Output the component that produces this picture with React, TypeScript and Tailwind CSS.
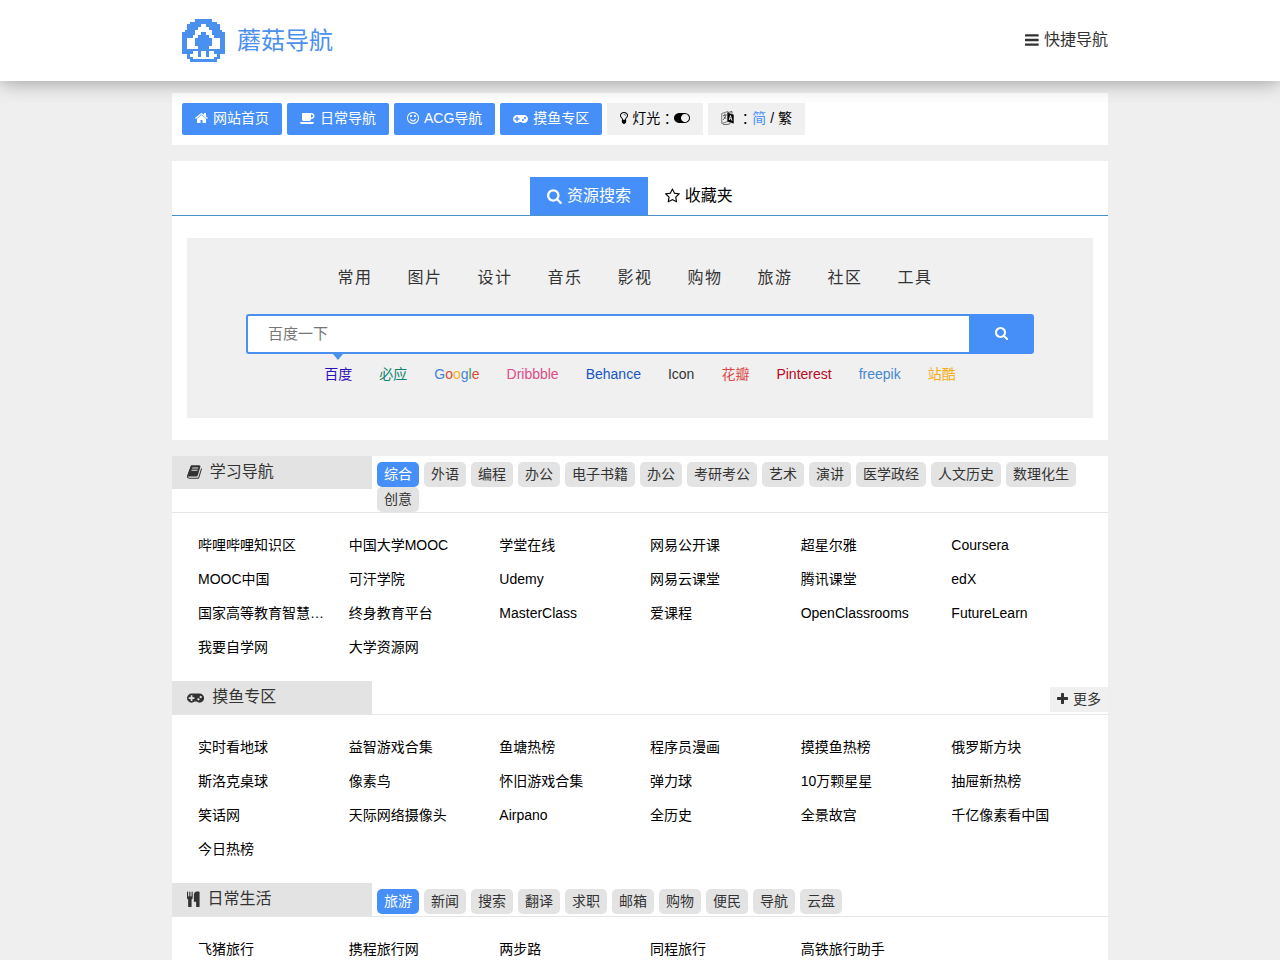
import React from "react";

type Glyph = { x: number; w: number; d: string };

const glyphs: Record<string, Glyph> = {
  home: { x: 64, w: 1664, d: "M1472 992v480q0 26-19 45t-45 19h-384v-384h-256v384h-384q-26 0-45-19t-19-45v-480q0-1 .5-3t.5-3l575-474 575 474q1 2 1 6zm223-69l-62 74q-8 9-21 11h-3q-13 0-21-7l-692-577-692 577q-12 8-24 7-13-2-21-11l-62-74q-8-10-7-23.5t11-21.5l719-599q32-26 76-26t76 26l244 204v-195q0-14 9-23t23-9h192q14 0 23 9t9 23v408l219 182q10 8 11 21.5t-7 23.5z" },
  search: { x: 64, w: 1664, d: "M1216 832q0-185-131.5-316.5t-316.5-131.5-316.5 131.5-131.5 316.5 131.5 316.5 316.5 131.5 316.5-131.5 131.5-316.5zm512 832q0 52-38 90t-90 38q-54 0-90-38l-343-342q-179 124-399 124-143 0-273.5-55.5t-225-150-150-225-55.5-273.5 55.5-273.5 150-225 225-150 273.5-55.5 273.5 55.5 225 150 150 225 55.5 273.5q0 220-124 399l343 343q37 37 37 90z" },
  bars: { x: 128, w: 1536, d: "M1664 1344v128q0 26-19 45t-45 19h-1408q-26 0-45-19t-19-45v-128q0-26 19-45t45-19h1408q26 0 45 19t19 45zm0-512v128q0 26-19 45t-45 19h-1408q-26 0-45-19t-19-45v-128q0-26 19-45t45-19h1408q26 0 45 19t19 45zm0-512v128q0 26-19 45t-45 19h-1408q-26 0-45-19t-19-45v-128q0-26 19-45t45-19h1408q26 0 45 19t19 45z" },
  plus: { x: 192, w: 1408, d: "M1600 736v192q0 40-28 68t-68 28h-416v416q0 40-28 68t-68 28h-192q-40 0-68-28t-28-68v-416h-416q-40 0-68-28t-28-68v-192q0-40 28-68t68-28h416v-416q0-40 28-68t68-28h192q40 0 68 28t28 68v416h416q40 0 68 28t28 68z" },
  star: { x: 64, w: 1664, d: "M1201 1004l306-297-422-62-189-382-189 382-422 62 306 297-73 421 378-199 377 199zm527-357q0 22-26 48l-363 354 86 500q1 7 1 20 0 50-41 50-19 0-40-12l-449-236-449 236q-22 12-40 12-21 0-31.5-14.5t-10.5-35.5q0-6 2-20l86-500-364-354q-25-27-25-48 0-37 56-46l502-73 225-455q19-41 49-41t49 41l225 455 502 73q56 9 56 46z" },
  smile: { x: 128, w: 1536, d: "M1262 1075q-37 121-138 195t-228 74-228-74-138-195q-8-25 4-48.5t38-31.5q25-8 48.5 4t31.5 38q25 80 92.5 129.5t151.5 49.5 151.5-49.5 92.5-129.5q8-26 32-38t49-4 37 31.5 4 48.5zm-494-435q0 53-37.5 90.5t-90.5 37.5-90.5-37.5-37.5-90.5 37.5-90.5 90.5-37.5 90.5 37.5 37.5 90.5zm512 0q0 53-37.5 90.5t-90.5 37.5-90.5-37.5-37.5-90.5 37.5-90.5 90.5-37.5 90.5 37.5 37.5 90.5zm256 256q0-130-51-248.5t-136.5-204-204-136.5-248.5-51-248.5 51-204 136.5-136.5 204-51 248.5 51 248.5 136.5 204 204 136.5 248.5 51 248.5-51 204-136.5 136.5-204 51-248.5zm128 0q0 209-103 385.5t-279.5 279.5-385.5 103-385.5-103-279.5-279.5-103-385.5 103-385.5 279.5-279.5 385.5-103 385.5 103 279.5 279.5 103 385.5z" },
  coffee: { x: 0, w: 1920, d: "M1664 640q0-80-56-136t-136-56h-64v384h64q80 0 136-56t56-136zm-1664 768h1792q0 106-75 181t-181 75h-1280q-106 0-181-75t-75-181zm1856-768q0 159-112.5 271.5t-271.5 112.5h-64v32q0 92-66 158t-158 66h-704q-92 0-158-66t-66-158v-736q0-26 19-45t45-19h1152q159 0 271.5 112.5t112.5 271.5z" },
  gamepad: { x: 0, w: 1920, d: "M832 1088v-128q0-14-9-23t-23-9h-192v-192q0-14-9-23t-23-9h-128q-14 0-23 9t-9 23v192h-192q-14 0-23 9t-9 23v128q0 14 9 23t23 9h192v192q0 14 9 23t23 9h128q14 0 23-9t9-23v-192h192q14 0 23-9t9-23zm576 64q0-53-37.5-90.5t-90.5-37.5-90.5 37.5-37.5 90.5 37.5 90.5 90.5 37.5 90.5-37.5 37.5-90.5zm256-256q0-53-37.5-90.5t-90.5-37.5-90.5 37.5-37.5 90.5 37.5 90.5 90.5 37.5 90.5-37.5 37.5-90.5zm256 128q0 212-150 362t-362 150q-192 0-338-128h-220q-146 128-338 128-212 0-362-150t-150-362 150-362 362-150h896q212 0 362 150t150 362z" },
  book: { x: 64, w: 1664, d: "M1703 478q40 57 18 129l-275 906q-19 64-76.5 107.5t-122.5 43.5h-923q-77 0-148.5-53.5t-99.5-131.5q-24-67-2-127 0-4 3-27t4-37q1-8-3-21.5t-3-19.5q2-11 8-21t16.5-23.5 16.5-23.5q23-38 45-91.5t30-91.5q3-10 .5-30t-.5-28q3-11 17-28t17-23q21-36 42-92t25-90q1-9-2.5-32t.5-28q4-13 22-30.5t22-22.5q19-26 42.5-84.5t27.5-96.5q1-8-3-25.5t-2-26.5q2-8 9-18t18-23 17-21q8-12 16.5-30.5t15-35 16-36 19.5-32 26.5-23.5 36-11.5 47.5 5.5l-1 3q38-9 51-9h761q74 0 114 56t18 130l-274 906q-36 119-71.5 153.5t-128.5 34.5h-869q-27 0-38 15-11 16-1 43 24 70 144 70h923q29 0 56-15.5t35-41.5l300-987q7-22 5-57 38 15 59 43zm-1064 2q-4 13 2 22.5t20 9.5h608q13 0 25.5-9.5t16.5-22.5l21-64q4-13-2-22.5t-20-9.5h-608q-13 0-25.5 9.5t-16.5 22.5zm-83 256q-4 13 2 22.5t20 9.5h608q13 0 25.5-9.5t16.5-22.5l21-64q4-13-2-22.5t-20-9.5h-608q-13 0-25.5 9.5t-16.5 22.5z" },
  cutlery: { x: 192, w: 1408, d: "M832 128v640q0 61-35.5 111t-92.5 70v779q0 52-38 90t-90 38h-128q-52 0-90-38t-38-90v-779q-57-20-92.5-70t-35.5-111v-640q0-26 19-45t45-19 45 19 19 45v416q0 26 19 45t45 19 45-19 19-45v-416q0-26 19-45t45-19 45 19 19 45v416q0 26 19 45t45 19 45-19 19-45v-416q0-26 19-45t45-19 45 19 19 45zm768 0v1600q0 52-38 90t-90 38h-128q-52 0-90-38t-38-90v-512h-224q-13 0-22.5-9.5t-9.5-22.5v-800q0-132 94-226t226-94h256q26 0 45 19t19 45z" },
  toggle: { x: 0, w: 2048, d: "M0 896q0-130 51-248.5t136.5-204 204-136.5 248.5-51h768q130 0 248.5 51t204 136.5 136.5 204 51 248.5-51 248.5-136.5 204-204 136.5-248.5 51h-768q-130 0-248.5-51t-204-136.5-136.5-204-51-248.5zm1408 512q104 0 198.5-40.5t163.5-109.5 109.5-163.5 40.5-198.5-40.5-198.5-109.5-163.5-163.5-109.5-198.5-40.5-198.5 40.5-163.5 109.5-109.5 163.5-40.5 198.5 40.5 198.5 109.5 163.5 163.5 109.5 198.5 40.5z" },
  bulb: { x: 384, w: 1024, d: "M1120 576q0 13-9.5 22.5t-22.5 9.5-22.5-9.5-9.5-22.5q0-46-54-71t-106-25q-13 0-22.5-9.5t-9.5-22.5 9.5-22.5 22.5-9.5q50 0 99.5 16t87 54 37.5 90zm160 0q0-72-34.5-134t-90-101.5-123-62-136.5-22.5-136.5 22.5-123 62-90 101.5-34.5 134q0 101 68 180 10 11 30.5 33t30.5 33q128 153 141 298h228q13-145 141-298 10-11 30.5-33t30.5-33q68-79 68-180zm128 0q0 155-103 268-45 49-74.5 87t-59.5 95.5-34 107.5q47 28 47 82 0 37-25 64 25 27 25 64 0 52-45 81 13 23 13 47 0 46-31.5 71t-77.5 25q-20 44-60 70t-87 26-87-26-60-70q-46 0-77.5-25t-31.5-71q0-24 13-47-45-29-45-81 0-37 25-64-25-27-25-64 0-54 47-82-4-50-34-107.5t-59.5-95.5-74.5-87q-103-113-103-268 0-99 44.5-184.5t117-142 164-89 186.5-32.5 186.5 32.5 164 89 117 142 44.5 184.5z" },
};

function Icon({ name, className = "h-3.5" }: { name: string; className?: string }) {
  const g = glyphs[name];
  return (
    <svg viewBox={`${g.x} 0 ${g.w} 1792`} className={`${className} w-auto shrink-0 fill-current`} aria-hidden="true">
      <path d={g.d} />
    </svg>
  );
}

function LanguageIcon() {
  return (
    <svg viewBox="0 0 26 28" className="h-3.5 w-auto shrink-0" fill="none" stroke="currentColor" aria-hidden="true">
      <path d="M1.500 5 13.500 1v20L1.500 25z" strokeWidth="1" />
      <path d="M4 9.500 11 7.500M7.500 5.500v3M10 8.500c-1 4-3 7-6 9M5.500 11.500l5 4" strokeWidth="1.200" />
      <path d="M13.500 4 25 7.500v17L13.500 21z" fill="currentColor" strokeWidth=".8" />
      <path d="m16.500 18 2.500-9 3 10.500M17.500 15l4 1.200" stroke="#f0f0f0" strokeWidth="1.800" />
      <path d="M14 3 22 1v4M4 26.500c5 1.200 11 1 15-2" strokeWidth="1.200" />
    </svg>
  );
}

const mushroom = [
  "     ######     ",
  "   ##########   ",
  "  #####  #####  ",
  "  ####    ####  ",
  " ####      #### ",
  "#####  ##  #####",
  "####  ####  ####",
  "##   ######   ##",
  "##   ######   ##",
  "##   ######   ##",
  "##    ####    ##",
  "################",
  "####  #  #  ####",
  "  #   #  #   #  ",
  "  ##        ##  ",
  "   ##########   ",
];

// One path for all cells, so that neighbouring cells join without seams.
const mushroomPath = mushroom
  .flatMap((row, y) => [...row.matchAll(/#+/g)].map((run) => `M${run.index} ${y}h${run[0].length}v1h-${run[0].length}z`))
  .join("");

function Logo() {
  return (
    <a href="#" className="flex items-center gap-3 pl-2.5 text-[#4a90ee]">
      <svg viewBox="0 0 16 16" className="size-[43px] fill-current" shapeRendering="crispEdges" aria-hidden="true">
        <path d={mushroomPath} />
      </svg>
      <span className="text-2xl">蘑菇导航</span>
    </a>
  );
}

const pages = [
  { icon: "home", label: "网站首页" },
  { icon: "coffee", label: "日常导航" },
  { icon: "smile", label: "ACG导航" },
  { icon: "gamepad", label: "摸鱼专区" },
];

const categories = ["常用", "图片", "设计", "音乐", "影视", "购物", "旅游", "社区", "工具"];

const engines = [
  { label: "百度", color: "text-[#2c0fb8]" },
  { label: "必应", color: "text-[#11836f]" },
  { label: "Google", color: "" },
  { label: "Dribbble", color: "text-[#dd4b86]" },
  { label: "Behance", color: "text-[#1655c4]" },
  { label: "Icon", color: "text-[#333333]" },
  { label: "花瓣", color: "text-[#dc4a4a]" },
  { label: "Pinterest", color: "text-[#b8081b]" },
  { label: "freepik", color: "text-[#4488cc]" },
  { label: "站酷", color: "text-[#f5ae18]" },
];

function GoogleName() {
  return (
    <>
      <span className="text-[#4285dc]">G</span>
      <span className="text-[#dc4a38]">o</span>
      <span className="text-[#f2b616]">o</span>
      <span className="text-[#4285dc]">g</span>
      <span className="text-[#34a050]">l</span>
      <span className="text-[#dc4a38]">e</span>
    </>
  );
}

function Colon() {
  return <span className="font-['Noto_Sans_CJK_TC',sans-serif]">：</span>;
}

type SectionData = { icon: string; title: string; tags?: string[]; more?: boolean; links: string[] };

const sections: SectionData[] = [
  {
    icon: "book",
    title: "学习导航",
    tags: ["综合", "外语", "编程", "办公", "电子书籍", "办公", "考研考公", "艺术", "演讲", "医学政经", "人文历史", "数理化生", "创意"],
    links: [
      "哔哩哔哩知识区", "中国大学MOOC", "学堂在线", "网易公开课", "超星尔雅", "Coursera",
      "MOOC中国", "可汗学院", "Udemy", "网易云课堂", "腾讯课堂", "edX",
      "国家高等教育智慧…", "终身教育平台", "MasterClass", "爱课程", "OpenClassrooms", "FutureLearn",
      "我要自学网", "大学资源网",
    ],
  },
  {
    icon: "gamepad",
    title: "摸鱼专区",
    more: true,
    links: [
      "实时看地球", "益智游戏合集", "鱼塘热榜", "程序员漫画", "摸摸鱼热榜", "俄罗斯方块",
      "斯洛克桌球", "像素鸟", "怀旧游戏合集", "弹力球", "10万颗星星", "抽屉新热榜",
      "笑话网", "天际网络摄像头", "Airpano", "全历史", "全景故宫", "千亿像素看中国",
      "今日热榜",
    ],
  },
  {
    icon: "cutlery",
    title: "日常生活",
    tags: ["旅游", "新闻", "搜索", "翻译", "求职", "邮箱", "购物", "便民", "导航", "云盘"],
    links: ["飞猪旅行", "携程旅行网", "两步路", "同程旅行", "高铁旅行助手"],
  },
];

function Section({ icon, title, tags, more, links }: SectionData) {
  return (
    <section>
      <div className="flex items-start border-b border-[#e6e6e6]">
        <h2 className="flex h-[33px] w-[200px] shrink-0 items-center gap-2 bg-[#e3e3e3] pb-0.5 pl-[15px] text-base text-[#333333]">
          <Icon name={icon} className="h-4" />
          {title}
        </h2>
        {tags && (
          <div className="flex flex-1 flex-wrap gap-x-[5px] pt-1.5 pl-[5px]">
            {tags.map((tag, i) => (
              <button
                key={i}
                type="button"
                className={`h-[25px] rounded-[5px] px-[7px] pb-0.5 text-sm ${i === 0 ? "bg-[#478ff8] text-white" : "bg-[#e3e3e3] text-[#333333]"}`}
              >
                {tag}
              </button>
            ))}
          </div>
        )}
        {more && (
          <a href="#" className="mt-1.5 ml-auto flex h-[25px] items-center gap-[5px] bg-[#f0f0f0] px-[7px] pb-0.5 text-sm text-[#333333]">
            <Icon name="plus" />
            更多
          </a>
        )}
      </div>
      <ul className="grid grid-cols-6 px-4 py-4 text-sm leading-[33px] text-black">
        {links.map((link) => (
          <li key={link} className="h-[34px] truncate px-2.5">
            <a href="#">{link}</a>
          </li>
        ))}
      </ul>
    </section>
  );
}

export default function App() {
  return (
    <div className="min-h-screen bg-[#efefef] font-['Liberation_Sans','Noto_Sans_CJK_SC',sans-serif] text-[#333333]">
      <header className="relative z-10 bg-white shadow-[0_0_20px_rgba(0,0,0,0.4)]">
        <div className="mx-auto flex h-[81px] max-w-[936px] items-center justify-between">
          <Logo />
          <button type="button" className="flex items-center gap-[5px] pb-0.5 text-base">
            <Icon name="bars" className="h-4" />
            快捷导航
          </button>
        </div>
      </header>

      <main className="mx-auto max-w-[936px] pt-3">
        <nav className="mb-4 flex flex-wrap gap-[5px] bg-white p-2.5 text-sm">
          {pages.map(({ icon, label }) => (
            <a key={icon} href="#" className="flex h-8 items-center gap-[5px] rounded-[2px] bg-[#478ff8] px-[13px] pb-0.5 text-white">
              <Icon name={icon} />
              {label}
            </a>
          ))}
          <button type="button" className="flex h-8 items-center gap-1 bg-[#f0f0f0] px-[13px] pb-0.5 text-black">
            <Icon name="bulb" />
            <span className="flex items-center">
              灯光
              <Colon />
              <Icon name="toggle" />
            </span>
          </button>
          <div className="flex h-8 items-center gap-1 bg-[#f0f0f0] px-[13px] pb-0.5 text-black">
            <LanguageIcon />
            <div className="flex items-center whitespace-pre">
              <Colon />
              <a href="#" className="text-[#478ff8]">简</a>
              <span>{" / "}</span>
              <a href="#">繁</a>
            </div>
          </div>
        </nav>

        <section className="mb-4 bg-white pt-4 pb-[22px]">
          <div className="flex justify-center border-b border-[#4a93c8] text-base">
            <button type="button" className="flex h-[38px] items-center gap-[5px] bg-[#478ff8] px-[17px] text-white">
              <Icon name="search" className="h-4" />
              资源搜索
            </button>
            <button type="button" className="flex h-[38px] items-center gap-[5px] px-[17px] text-black">
              <Icon name="star" className="h-4" />
              收藏夹
            </button>
          </div>
          <div className="mx-[15px] mt-[22px] flex h-[180px] flex-col items-center bg-[#f0f0f0] pt-6">
            <div className="flex pr-2.5 text-base tracking-widest">
              {categories.map((category) => (
                <button key={category} type="button" className="h-8 w-[70px]">
                  {category}
                </button>
              ))}
            </div>
            <form className="mt-5 flex h-10 w-[87%]" onSubmit={(e) => e.preventDefault()}>
              <input
                type="text"
                aria-label="百度一下"
                placeholder="百度一下"
                className="min-w-0 flex-1 rounded-l-[3px] border-2 border-r-0 border-[#4a90ee] bg-white px-5 text-[15px] outline-none placeholder:text-[#777777]"
              />
              <button type="submit" aria-label="搜索" className="flex w-[65px] items-center justify-center rounded-r-[3px] bg-[#478ff8] pb-0.5 text-white">
                <Icon name="search" />
              </button>
            </form>
            <div className="flex gap-[27px] text-sm">
              {engines.map(({ label, color }, i) => (
                <a key={label} href="#" className={`relative flex h-10 items-center ${color}`}>
                  {i === 0 && (
                    <span className="absolute top-0 left-1/2 -ml-[5px] border-x-[5px] border-t-[6px] border-x-transparent border-t-[#4a90ee]" />
                  )}
                  {label === "Google" ? <GoogleName /> : label}
                </a>
              ))}
            </div>
          </div>
        </section>

        <div className="bg-white">
          {sections.map((section) => (
            <Section key={section.title} {...section} />
          ))}
        </div>
      </main>
    </div>
  );
}
